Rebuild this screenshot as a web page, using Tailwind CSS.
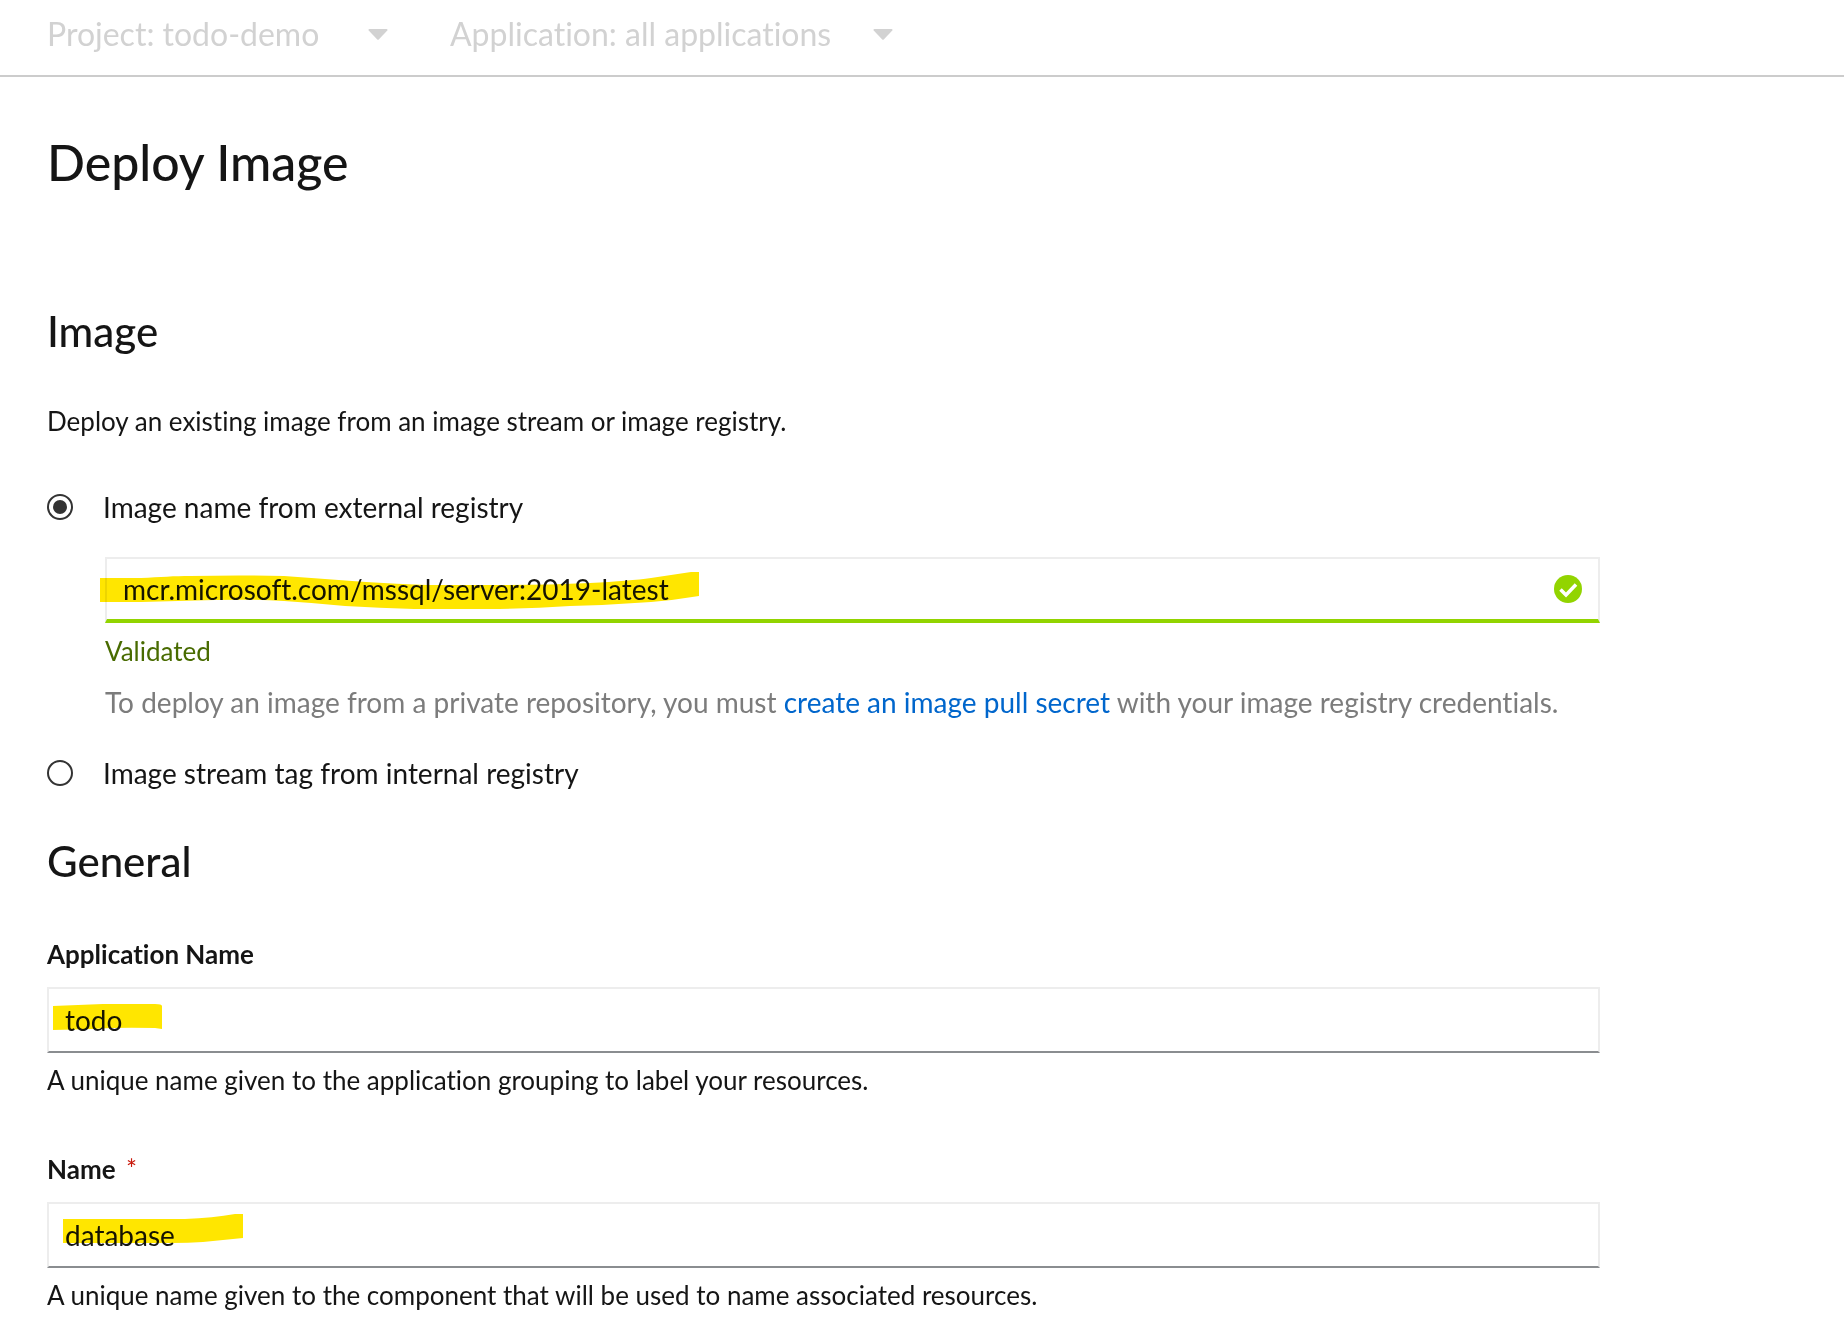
<!DOCTYPE html>
<html lang="en">
<head>
<meta charset="utf-8">
<title>Deploy Image</title>
<meta name="viewport" content="width=device-width, initial-scale=1">
<script src="https://cdn.jsdelivr.net/npm/@tailwindcss/browser@4"></script>
</head>
<body class="bg-white font-['Lato',sans-serif] text-[26px] leading-10 text-[#151515] [font-variant-ligatures:none]">
<header class="flex h-[77px] items-start gap-[62px] border-b-2 border-[#cccccc] pl-[47px] pt-[14px] text-[32px] text-[#d2d2d2]">
  <button type="button" disabled class="flex w-[341px] items-center justify-between">Project: todo-demo
    <svg class="h-[11px] w-5" viewBox="0 0 20 11" fill="currentColor" aria-hidden="true"><path d="M1.5 0h17q1.500 0 .8 1.500L11 10.300q-1 1-2 0L.7 1.500Q0 0 1.500 0z"/></svg>
  </button>
  <button type="button" disabled class="flex w-[443px] items-center justify-between">Application: all applications
    <svg class="h-[11px] w-5" viewBox="0 0 20 11" fill="currentColor" aria-hidden="true"><path d="M1.5 0h17q1.500 0 .8 1.500L11 10.300q-1 1-2 0L.7 1.500Q0 0 1.500 0z"/></svg>
  </button>
</header>
<main class="max-w-[1600px] pl-[47px] pt-[55px]">
  <h1 class="text-[50px] leading-[60px] font-medium">Deploy Image</h1>
  <form class="mt-[115px]">
    <section>
      <h2 class="text-[42px] leading-[48px] font-medium">Image</h2>
      <p class="mt-[46px]">Deploy an existing image from an image stream or image registry.</p>
      <div class="mt-[46px] flex items-center gap-[30px] text-[28px]">
        <input id="external" type="radio" name="source" checked class="grid size-[26px] appearance-none place-items-center rounded-full border-2 border-[#333333] before:size-[14px] before:rounded-full checked:before:bg-[#333333]">
        <label for="external">Image name from external registry</label>
      </div>
      <div class="mt-[30px] pl-[58px]">
        <div class="relative">
          <input type="text" aria-label="Image name" aria-describedby="validated" value="mcr.microsoft.com/mssql/server:2019-latest" class="block h-[66px] w-full border-2 border-b-4 border-[#ededed] border-b-[#92d400] bg-white pl-4 pr-16 text-[28px] outline-none">
          <svg class="pointer-events-none absolute -left-[5px] top-[15px] h-[38px] w-[600px] mix-blend-multiply" viewBox="0 0 600 38" fill="#ffe600" aria-hidden="true"><path d="M0 6H41C60 5 75 4 90 4Q140 3 184 4Q225 7 266 10Q297 12 327 13H408Q450 13 490 11Q530 9 551 6L591 0H599V24Q575 28 551 30Q510 33 470 34Q430 37 388 37H314Q280 36 245 34Q215 31 184 29Q150 27 115 28L41 30H0z"/></svg>
          <svg class="absolute right-[18px] top-[18px] size-7" viewBox="0 0 28 28" aria-hidden="true"><circle cx="14" cy="14" r="14" fill="#92d400"/><path d="M6.500 14.500l5.500 5.500L22 9.500" fill="none" stroke="#fff" stroke-width="3.500"/></svg>
        </div>
        <p id="validated" class="mt-2 text-[#486b00]">Validated</p>
        <p class="mt-[11px] text-[28px] text-[#7c7c7c]">To deploy an image from a private repository, you must <a href="#" class="text-[#0066cc]">create an image pull secret</a> with your image registry credentials.</p>
      </div>
      <div class="mt-[31px] flex items-center gap-[30px] text-[28px]">
        <input id="internal" type="radio" name="source" class="grid size-[26px] appearance-none place-items-center rounded-full border-2 border-[#333333] before:size-[14px] before:rounded-full checked:before:bg-[#333333]">
        <label for="internal">Image stream tag from internal registry</label>
      </div>
    </section>
    <section class="mt-11">
      <h2 class="text-[42px] leading-[48px] font-medium">General</h2>
      <div class="mt-[49px]">
        <label for="app" class="block font-bold">Application Name</label>
        <div class="relative mt-[13px]">
          <input id="app" type="text" value="todo" class="block h-[66px] w-full border-2 border-[#ededed] border-b-[#8a8d90] bg-white px-4 text-[28px] outline-none">
          <svg class="pointer-events-none absolute left-[6px] top-[17px] h-[26px] w-[109px] mix-blend-multiply" viewBox="0 0 109 26" fill="#ffe600" aria-hidden="true"><path d="M0 2Q25 1 50 0H102Q109 0 109 2V25L102 24Q65 23 40 25L0 26z"/></svg>
        </div>
        <p class="mt-[7px]">A unique name given to the application grouping to label your resources.</p>
      </div>
      <div class="mt-[49px]">
        <label for="name" class="block font-bold">Name <span class="ml-1 font-normal text-[#c9190b]">*</span></label>
        <div class="relative mt-[13px]">
          <input id="name" type="text" required value="database" class="block h-[66px] w-full border-2 border-[#ededed] border-b-[#8a8d90] bg-white px-4 text-[28px] outline-none">
          <svg class="pointer-events-none absolute left-4 top-3 h-[29px] w-[180px] mix-blend-multiply" viewBox="0 0 180 29" fill="#ffe600" aria-hidden="true"><path d="M0 5H122Q150 4 172 0H180V24L140 28Q125 29 110 29H0z"/></svg>
        </div>
        <p class="mt-[7px]">A unique name given to the component that will be used to name associated resources.</p>
      </div>
    </section>
  </form>
</main>
</body>
</html>
